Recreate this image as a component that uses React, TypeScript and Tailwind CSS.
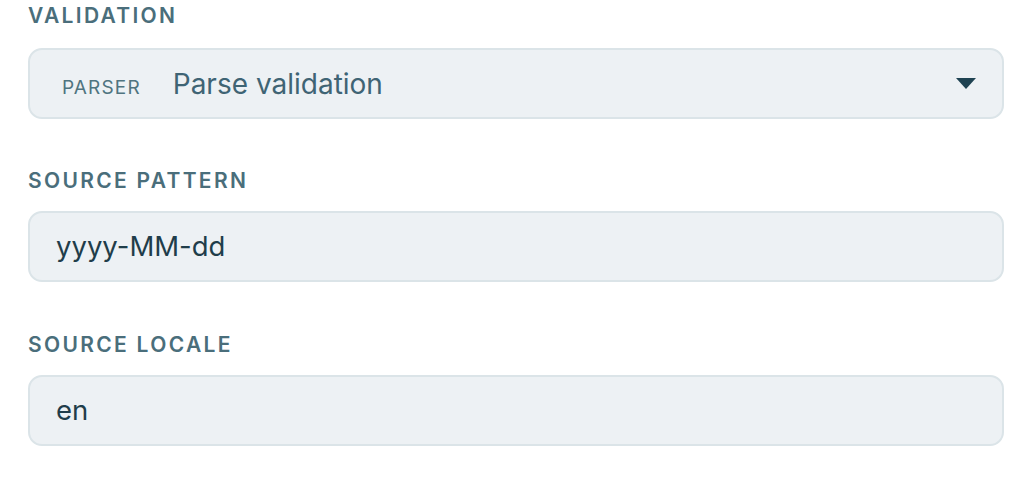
export default function App() {
  return (
    <div className="min-h-screen bg-white px-[28px] pt-[4px] font-['Inter',sans-serif]">
      <div className="flex flex-col">
        {/* Validation */}
        <label className="h-[24px] text-[21px] font-semibold uppercase tracking-[0.11em] text-[#4a6e7b] leading-[24px]">
          Validation
        </label>
        <div className="mt-[20px] flex h-[71px] items-center rounded-[14px] border-2 border-[#dbe4e8] bg-[#edf1f4] pl-[32px] pr-[26px]">
          <div className="flex flex-1 items-baseline">
            <span className="text-[19px] uppercase tracking-[0.06em] text-[#4f7480]">Parser</span>
            <span className="ml-[32px] text-[28px] text-[#3f6474]">Parse validation</span>
          </div>
          <svg width="20" height="11" viewBox="0 0 20 11" className="shrink-0">
            <path d="M0 0 H20 L10 11 Z" fill="#1f4352" />
          </svg>
        </div>

        {/* Source pattern */}
        <label className="mt-[50px] h-[24px] text-[21px] font-semibold uppercase tracking-[0.11em] text-[#4a6e7b] leading-[24px]">
          Source pattern
        </label>
        <div className="mt-[18px] flex h-[71px] items-center rounded-[14px] border-2 border-[#dbe4e8] bg-[#edf1f4] px-[26px]">
          <span className="text-[27.5px] text-[#1f3d4a]">yyyy-MM-dd</span>
        </div>

        {/* Source locale */}
        <label className="mt-[51px] h-[24px] text-[21px] font-semibold uppercase tracking-[0.11em] text-[#4a6e7b] leading-[24px]">
          Source locale
        </label>
        <div className="mt-[18px] flex h-[71px] items-center rounded-[14px] border-2 border-[#dbe4e8] bg-[#edf1f4] px-[26px]">
          <span className="text-[27.5px] text-[#1f3d4a]">en</span>
        </div>
      </div>
    </div>
  );
}
